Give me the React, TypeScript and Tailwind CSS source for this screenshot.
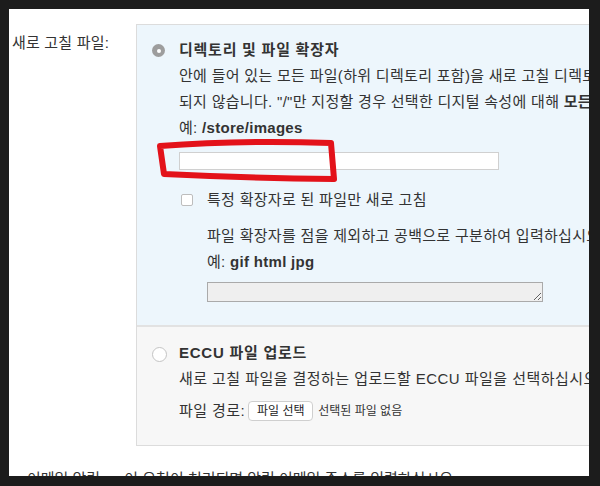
export default function App() {
	return (
		<div className="h-[486px] w-[600px] bg-[#1c1c1c] pb-[10px] pl-[9px] pr-[11px] pt-[9px]">
			<div className="relative h-full w-full overflow-hidden bg-white font-['Liberation_Sans','Noto_Sans_CJK_KR',sans-serif] text-[15px] leading-[26px] text-[#333]">
				<div className="flex pt-[15px]">
					<div className="mt-[6px] w-[127px] shrink-0 pl-[3px] whitespace-nowrap tracking-[0.2px]">새로 고칠 파일:</div>

					<div className="w-[520px] shrink-0 border border-[#dcdcdc]">
						{/* directory option */}
						<div className="flex bg-[#edf6fc] pb-[23px] pl-[15px] pt-[12px]">
							<div className="mt-[7px] flex h-[13px] w-[13px] shrink-0 items-center justify-center rounded-full bg-[#9d9d9d]">
								<div className="h-[4px] w-[4px] rounded-full bg-white" />
							</div>
							<div className="ml-[14px] whitespace-nowrap tracking-[0.3px]">
								<div className="font-bold tracking-[0.75px]">디렉토리 및 파일 확장자</div>
								<div>안에 들어 있는 모든 파일(하위 디렉토리 포함)을 새로 고칠 디렉토리를 입력하십시오. 디렉토리 자체는 새로 고침</div>
								<div>
									되지 않습니다. "/"만 지정할 경우 선택한 디지털 속성에 대해 <span className="font-bold">모든</span> 콘텐츠가 새로 고쳐집니다.
								</div>
								<div>
									예: <span className="font-bold">/store/images</span>
								</div>
								<input
									type="text"
									className="mt-[11px] block h-[18px] w-[320px] border border-[#d0d0d0] bg-white"
								/>
								<div className="ml-[2px] mt-[17px] flex items-center">
									<div className="h-[12px] w-[12px] rounded-[2px] border border-[#bdbdbd] bg-white" />
									<span className="ml-[14px]">특정 확장자로 된 파일만 새로 고침</span>
								</div>
								<div className="ml-[28px] mt-[10px]">
									<div>파일 확장자를 점을 제외하고 공백으로 구분하여 입력하십시오.</div>
									<div>
										예: <span className="font-bold">gif html jpg</span>
									</div>
									<textarea
										disabled
										className="mt-[7px] block h-[20px] w-[336px] resize border border-[#aaaaaa] bg-[#efefef]"
									/>
								</div>
							</div>
						</div>

						<div className="h-[2px] bg-[#e2e2e2]" />

						{/* ECCU upload option */}
						<div className="flex bg-[#f7f7f7] pb-[21px] pl-[15px] pt-[13px]">
							<div className="mt-[7px] h-[15px] w-[15px] shrink-0 rounded-full border border-[#c4c4c4] bg-white" />
							<div className="ml-[12px] whitespace-nowrap tracking-[0.45px]">
								<div className="font-bold tracking-[0.75px]">ECCU 파일 업로드</div>
								<div>새로 고칠 파일을 결정하는 업로드할 ECCU 파일을 선택하십시오.</div>
								<div className="mt-[6px] flex items-center">
									<span>파일 경로:</span>
									<button className="ml-[3px] h-[20px] w-[65px] rounded-[4px] border border-[#cfcfcf] bg-white text-[12px] leading-[18px] tracking-normal text-[#222]">
										파일 선택
									</button>
									<span className="ml-[5px] text-[12px] tracking-normal text-[#333]">선택된 파일 없음</span>
								</div>
							</div>
						</div>
					</div>
				</div>

				<div className="mt-[20px] flex whitespace-nowrap">
					<span className="pl-[18px]">이메일 알림:</span>
					<span className="ml-[20px]">이 요청이 처리되면 알릴 이메일 주소를 입력하십시오.</span>
				</div>

				{/* red marker scribble around the input */}
				<svg className="absolute left-0 top-0" width="400" height="200" fill="none">
					<path
						d="M151 137 Q 230 131 322 134 L 325 170 Q 240 169 155 165 Z"
						stroke="#e3121a"
						strokeWidth="6"
						strokeLinejoin="round"
					/>
				</svg>
			</div>
		</div>
	);
}
